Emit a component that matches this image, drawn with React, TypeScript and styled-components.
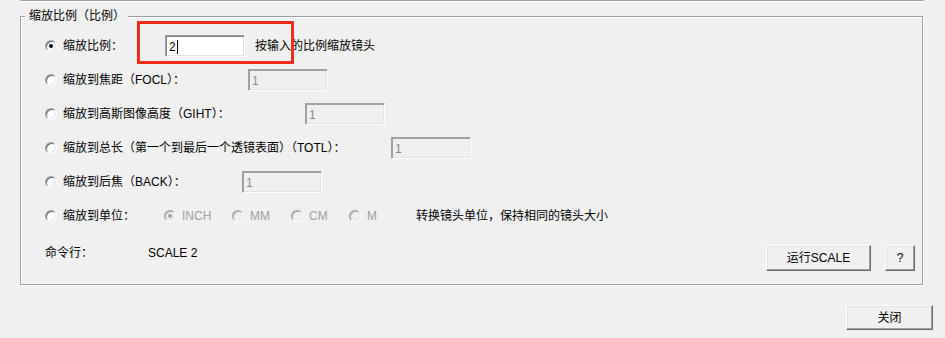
import React from 'react';
import styled, { createGlobalStyle } from 'styled-components';

const Global = createGlobalStyle`
  html, body { margin: 0; padding: 0; background: #f0f0f0; }
  body {
    font-family: "Liberation Sans", "Noto Sans CJK SC", sans-serif;
    font-size: 12px;
    line-height: 16px;
    color: #000;
  }
`;

const Page = styled.div`
  position: relative;
  width: 945px;
  height: 338px;
  overflow: hidden;
  display: flex;
  flex-direction: column;
`;

const TopRule = styled.div`
  margin-left: 20px;
  width: 904px;
  height: 1px;
  flex: none;
  background: #a0a0a0;
  box-shadow: 0 1px 0 #fff;
`;

const Group = styled.div`
  position: relative;
  flex: none;
  box-sizing: border-box;
  margin: 15px 0 0 20px;
  width: 903px;
  height: 269px;
  border: 1px solid #a0a0a0;
  box-shadow: inset 1px 1px 0 #fff, 1px 1px 0 #fff;
  padding: 12px 7px 0 24px;
  display: flex;
  flex-direction: column;
`;

const Legend = styled.div`
  position: absolute;
  top: -9px;
  left: 4px;
  padding: 0 3px 0 4px;
  background: #f0f0f0;
  white-space: nowrap;
`;

const Row = styled.div`
  height: 34px;
  display: flex;
  align-items: center;
  white-space: nowrap;
`;

const Radio = styled.span<{ $checked?: boolean; $disabled?: boolean }>`
  flex: none;
  width: 12px;
  height: 12px;
  box-sizing: border-box;
  border-radius: 50%;
  border: 1px solid;
  border-color: #a0a0a0 #fff #fff #a0a0a0;
  background: ${(p) => (p.$disabled ? '#f0f0f0' : '#fff')};
  box-shadow: inset 1px 1px 0 ${(p) => (p.$disabled ? '#b4b4b4' : '#696969')},
    inset -1px -1px 0 #e3e3e3;
  display: flex;
  align-items: center;
  justify-content: center;
  margin-right: 6px;
  &::after {
    content: '';
    width: 4px;
    height: 4px;
    border-radius: 50%;
    background: ${(p) =>
      p.$checked ? (p.$disabled ? '#a0a0a0' : '#000') : 'transparent'};
  }
`;

const Label = styled.span<{ $w: number }>`
  flex: none;
  width: ${(p) => p.$w}px;
  white-space: nowrap;
`;

const TextBox = styled.div<{ $disabled?: boolean }>`
  flex: none;
  box-sizing: border-box;
  width: 80px;
  height: 22px;
  border: 1px solid;
  border-color: #a0a0a0 #fff #fff #a0a0a0;
  box-shadow: inset 1px 1px 0 ${(p) => (p.$disabled ? '#a0a0a0' : '#828282')},
    inset -1px -1px 0 #e3e3e3;
  background: ${(p) => (p.$disabled ? '#f0f0f0' : '#fff')};
  color: ${(p) => (p.$disabled ? '#8a8a8a' : '#000')};
  padding: 2px 0 0 3px;
  display: flex;
  align-items: center;
  line-height: 16px;
`;

const Caret = styled.span`
  display: inline-block;
  width: 1px;
  height: 14px;
  background: #000;
  margin-left: 1px;
`;

const Hint = styled.span`
  margin-left: 10px;
  white-space: nowrap;
`;

const UnitOption = styled.span<{ $w: number }>`
  flex: none;
  width: ${(p) => p.$w}px;
  display: flex;
  align-items: center;
  color: #a0a0a0;
`;

const CommandRow = styled.div`
  margin-top: 12px;
  display: flex;
  align-items: flex-start;
  white-space: nowrap;
`;

const Spacer = styled.div`
  flex: 1;
`;

const Button = styled.button<{ $w: number; $h: number }>`
  flex: none;
  box-sizing: border-box;
  width: ${(p) => p.$w}px;
  height: ${(p) => p.$h}px;
  padding: 0;
  margin: 0;
  font: inherit;
  color: #000;
  background: #f0f0f0;
  border: 1px solid;
  border-color: #fff #696969 #696969 #fff;
  box-shadow: inset -1px -1px 0 #a0a0a0, inset 1px 1px 0 #e3e3e3;
  display: flex;
  align-items: center;
  justify-content: center;
`;

const ButtonGroup = styled.div`
  display: flex;
  gap: 14px;
`;

const Footer = styled.div`
  margin-top: 20px;
  padding-right: 12px;
  display: flex;
  justify-content: flex-end;
`;

const Annotation = styled.div`
  position: absolute;
  left: 137px;
  top: 21px;
  width: 157px;
  height: 43px;
  box-sizing: border-box;
  border: 3px solid #f22d1b;
  pointer-events: none;
`;

const rows = [
  { label: '缩放到焦距（FOCL）：', w: 185 },
  { label: '缩放到高斯图像高度（GIHT）：', w: 242 },
  { label: '缩放到总长（第一个到最后一个透镜表面）（TOTL）：', w: 328 },
  { label: '缩放到后焦（BACK）：', w: 179 },
];

const units = [
  { name: 'INCH', w: 68, checked: true },
  { name: 'MM', w: 59 },
  { name: 'CM', w: 58 },
  { name: 'M', w: 67 },
];

export default function App() {
  return (
    <Page>
      <Global />
      <TopRule />
      <Group>
        <Legend>缩放比例（比例）</Legend>
        <Row>
          <Radio $checked />
          <Label $w={102}>缩放比例：</Label>
          <TextBox>
            2<Caret />
          </TextBox>
          <Hint>按输入的比例缩放镜头</Hint>
        </Row>
        {rows.map((r) => (
          <Row key={r.label}>
            <Radio />
            <Label $w={r.w}>{r.label}</Label>
            <TextBox $disabled>1</TextBox>
          </Row>
        ))}
        <Row>
          <Radio />
          <Label $w={101}>缩放到单位：</Label>
          {units.map((u) => (
            <UnitOption key={u.name} $w={u.w}>
              <Radio $disabled $checked={u.checked} />
              {u.name}
            </UnitOption>
          ))}
          <span>转换镜头单位，保持相同的镜头大小</span>
        </Row>
        <CommandRow>
          <Label $w={103}>命令行：</Label>
          <span>SCALE 2</span>
          <Spacer />
          <ButtonGroup>
            <Button $w={105} $h={26}>运行SCALE</Button>
            <Button $w={30} $h={26}>?</Button>
          </ButtonGroup>
        </CommandRow>
      </Group>
      <Footer>
        <Button $w={87} $h={25}>关闭</Button>
      </Footer>
      <Annotation />
    </Page>
  );
}
